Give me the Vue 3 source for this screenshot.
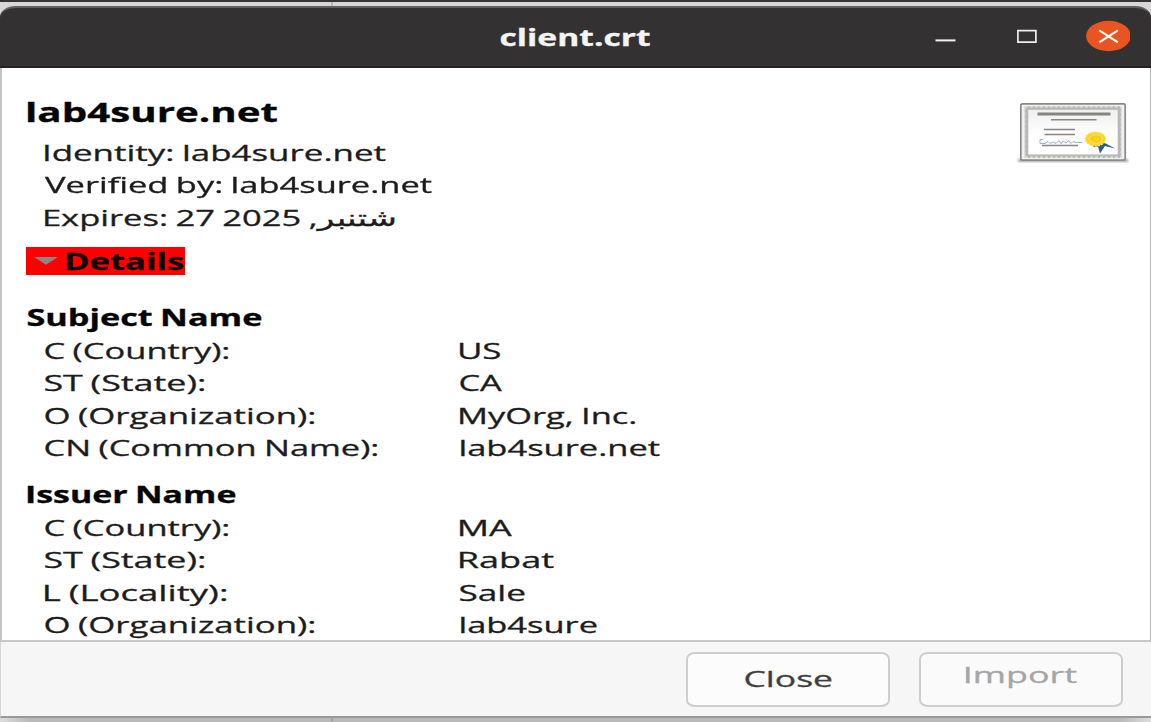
<script setup>
const summary = [
  ['Identity: lab4sure.net', 341],
  ['Verified by: lab4sure.net', 387],
  ['Expires: 27 شتنبر, 2025', 349],
]

const sections = [
  {
    title: 'Subject Name',
    width: 234,
    rows: [
      ['C (Country):', 184, 'US', 41],
      ['ST (State):', 160, 'CA', 43],
      ['O (Organization):', 270, 'MyOrg, Inc.', 176],
      ['CN (Common Name):', 333, 'lab4sure.net', 200],
    ],
  },
  {
    title: 'Issuer Name',
    width: 208,
    rows: [
      ['C (Country):', 184, 'MA', 53],
      ['ST (State):', 160, 'Rabat', 94],
      ['L (Locality):', 182, 'Sale', 65],
      ['O (Organization):', 270, 'lab4sure', 137],
    ],
  },
]

const ctx = document.createElement('canvas').getContext('2d')

// Stretches a label horizontally so that its ink spans the given width.
const vFit = {
  mounted(el, { value }) {
    const cs = getComputedStyle(el)
    ctx.font = `${cs.fontWeight} ${cs.fontSize} ${cs.fontFamily}`
    ctx.wordSpacing = cs.wordSpacing
    const m = ctx.measureText(el.textContent)
    const scale = value / (m.actualBoundingBoxRight + m.actualBoundingBoxLeft)
    el.style.transform = `translateX(${m.actualBoundingBoxLeft * scale}px) scaleX(${scale})`
  },
}
</script>

<template>
  <div class="desktop">
    <div class="window">
      <header class="titlebar">
        <div class="caption"><span v-fit="150" class="t">client.crt</span></div>
        <svg class="controls" width="200" height="32" viewBox="0 0 200 32">
          <path d="M5.5 20.4h20" stroke="#f2f2f2" stroke-width="2" />
          <path d="M87.9 10.6h18v11.6h-18z" fill="none" stroke="#eee" stroke-width="1.7" />
          <ellipse cx="178.5" cy="16" rx="22.4" ry="15.2" fill="#e95420" />
          <path d="M169.3 10.3l18.6 12M187.9 10.3l-18.6 12" stroke="#fff" stroke-width="2.1" />
        </svg>
      </header>

      <main class="content">
        <svg class="certificate" width="116" height="68" viewBox="0 0 116 68">
          <defs>
            <linearGradient id="paper" x1="0" y1="0" x2="0" y2="1">
              <stop offset="0" stop-color="#efefef" />
              <stop offset="0.6" stop-color="#fff" />
            </linearGradient>
            <filter id="soft"><feGaussianBlur stdDeviation="1.3" /></filter>
          </defs>
          <path d="M3 61h110v3H3z" fill="#777" opacity=".65" filter="url(#soft)" />
          <rect x="5.8" y="5.8" width="104.4" height="56.4" rx="1.6" fill="#f1f1ef" stroke="#888a85" stroke-width="1.7" />
          <rect x="11.5" y="10" width="93" height="48.2" fill="url(#paper)" stroke="#b8b9b7" stroke-width="3.6" />
          <rect x="9.8" y="8.8" width="96.4" height="50.4" fill="none" stroke="#dedede" stroke-width="1.4" stroke-dasharray="3 2" />
          <path d="M22.5 16h73" stroke="#858582" stroke-width="2.8" />
          <path d="M36 21.7h45.5M29 31.4h31M29.5 36.4h30.5M27 47.6h36" stroke="#858582" stroke-width="1.5" />
          <path d="M28 41.5h-3v4h5l3-2 2 2 3-1.500 3 1.500 3-3 2 3 2-2.500 3 2 3-2.500 2 3 2-2 3 1h6" fill="none" stroke="#8fa8cc" stroke-width=".9" />
          <path d="M80 44l-2 5 5-.5 2 7 5-7.5 10 2.500-13-7z" fill="#2b579b" />
          <ellipse cx="80.500" cy="41" rx="10.2" ry="7" fill="#f9d62e" stroke="#fce94f" stroke-width="1.3" stroke-dasharray="2 1" />
          <ellipse cx="81" cy="41" rx="6.200" ry="4.200" fill="#f8c91e" stroke="#fbe36b" stroke-width=".9" />
          <ellipse cx="81.500" cy="41" rx="3" ry="2" fill="#fbd51c" />
        </svg>

        <h1 class="name"><span v-fit="249" class="t">lab4sure.net</span></h1>
        <div v-for="[text, w] in summary" :key="text" class="row">
          <span v-fit="w" class="t">{{ text }}</span>
        </div>

        <div class="expander">
          <svg class="arrow" width="24" height="10" viewBox="0 0 24 10"><path d="M0 1h24L12 8.800z" fill="#8b8585" /></svg>
          <span v-fit="117" class="t">Details</span>
        </div>

        <section v-for="s in sections" :key="s.title" class="section">
          <h2 class="heading"><span v-fit="s.width" class="t">{{ s.title }}</span></h2>
          <div v-for="[k, kw, v, vw] in s.rows" :key="k" class="row">
            <div class="key"><span v-fit="kw" class="t">{{ k }}</span></div>
            <div class="value"><span v-fit="vw" class="t">{{ v }}</span></div>
          </div>
        </section>
      </main>

      <footer class="actions">
        <button class="button close"><span v-fit="87" class="t">Close</span></button>
        <button class="button import" disabled><span v-fit="111" class="t">Import</span></button>
      </footer>
    </div>
    <div class="below"></div>
  </div>
</template>

<style>
body {
  overflow: hidden;
}
</style>

<style scoped>
.desktop {
  width: 1151px;
  height: 722px;
  box-sizing: border-box;
  border-top: 2px solid #353334;
  padding-top: 4px;
  background: linear-gradient(90deg, transparent 331px, #bbb 331px, #bbb 333px, transparent 333px), #d7d7d7;
  font-family: "Open Sans", "Noto Sans", "DejaVu Sans", sans-serif;
  font-size: 22.5px;
  color: #1c1c1c;
  overflow: hidden;
}
.t {
  position: relative;
  top: 0.7px;
  left: 0.8px;
  display: inline-block;
  white-space: nowrap;
  word-spacing: -1px;
  transform-origin: 0 50%;
  -webkit-text-stroke: 0.3px currentColor;
}
.window {
  height: 712px;
  display: flex;
  flex-direction: column;
}
.titlebar {
  height: 62px;
  box-sizing: border-box;
  display: flex;
  flex-shrink: 0;
  align-items: flex-start;
  background: #333132;
  border-top: 2px solid #605e5f;
  border-bottom: 2px solid #242223;
  border-radius: 16px 16px 0 0 / 11px 11px 0 0;
}
.caption {
  width: 430px;
  margin-left: 500px;
  padding-top: 12px;
  font-weight: 700;
  line-height: 33px;
  color: #f4f4f4;
}
.controls {
  margin-top: 12px;
  flex-shrink: 0;
}
.content {
  position: relative;
  height: 574px;
  box-sizing: border-box;
  flex-shrink: 0;
  padding: 27.5px 24px 0 25px;
  background: #fff;
  border-left: 2px solid #c5c5c5;
  border-right: 1px solid #b8b8b8;
  border-bottom: 2px solid #c8c8c8;
  overflow: hidden;
}
.certificate {
  position: absolute;
  top: 30px;
  right: 19px;
}
.name,
.heading {
  margin: 0;
  font-weight: 700;
  color: #050505;
}
.name {
  font-size: 27px;
  line-height: 31px;
  height: 40.5px;
}
.row {
  display: flex;
  height: 32.5px;
  line-height: 32.5px;
  padding-left: 17px;
}
.expander {
  display: flex;
  align-items: center;
  gap: 8px;
  width: 151px;
  height: 27.500px;
  line-height: 27.5px;
  padding-left: 8px;
  margin: 13.5px 0 27px -1px;
  background: #f00;
  color: #120000;
  font-weight: 700;
}
.arrow {
  flex-shrink: 0;
}
.section {
  margin-bottom: 14.500px;
}
.heading {
  font-size: 22.5px;
  line-height: 32.5px;
}
.key {
  width: 415px;
  flex-shrink: 0;
}
.actions {
  flex: 1;
  display: flex;
  align-items: flex-start;
  justify-content: flex-end;
  gap: 29px;
  padding: 10px 28px 0 0;
  background: #f6f6f6;
  border-left: 1px solid #d6d6d6;
  border-bottom: 2px solid #999;
}
.button {
  width: 204px;
  height: 55px;
  box-sizing: border-box;
  margin: 0;
  border: 2px solid #cdcdcd;
  border-radius: 9px / 7px;
  background: #fcfcfc;
  font: inherit;
  line-height: 33px;
  text-align: left;
  color: #3f3f3f;
}
.close {
  padding: 0 0 3px 56px;
}
.import {
  padding: 0 0 12px 44px;
  background: #fafafa;
  color: #a5a5a5;
}
.below {
  height: 4px;
  background: linear-gradient(90deg, #ddd 0, #b9b9b9 30px, #b9b9b9 331px, #a5a5a5 331px, #a5a5a5 333px, #b9b9b9 333px, #b9b9b9 1120px, #ddd);
}
</style>
